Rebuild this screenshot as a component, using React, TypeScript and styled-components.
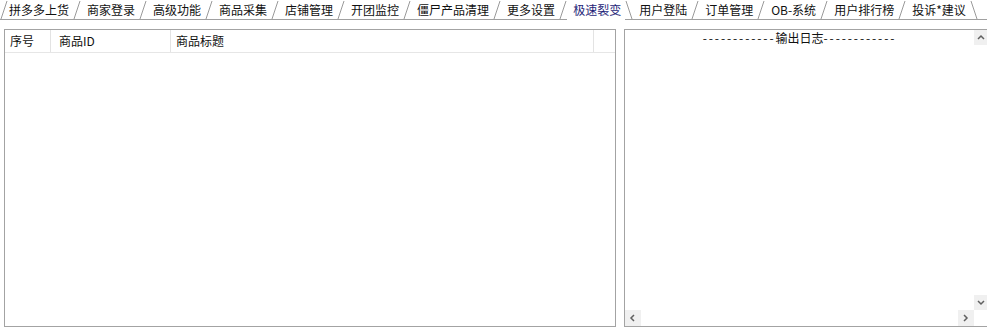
import React from 'react';
import styled, { createGlobalStyle } from 'styled-components';

const tabs = [
  '拼多多上货',
  '商家登录',
  '高级功能',
  '商品采集',
  '店铺管理',
  '开团监控',
  '僵尸产品清理',
  '更多设置',
  '极速裂变',
  '用户登陆',
  '订单管理',
  'OB-系统',
  '用户排行榜',
  '投诉*建议',
];

const ACTIVE = '极速裂变';

const GlobalStyle = createGlobalStyle`
  html, body {
    margin: 0;
    padding: 0;
    background: #ffffff;
    overflow: hidden;
  }
  body {
    font-family: "Noto Sans CJK SC", "Noto Sans", sans-serif;
    font-size: 12px;
    color: #111111;
  }
`;

const Page = styled.div`
  width: 987px;
  height: 332px;
  display: flex;
  flex-direction: column;
`;

const TabBar = styled.div`
  height: 20px;
  box-sizing: border-box;
  display: flex;
  align-items: stretch;
  border-bottom: 1px solid #a0a0a0;
`;

const Tab = styled.div<{ $active?: boolean; $first?: boolean }>`
  padding: 0 4px 0 ${({ $first }) => ($first ? 1 : 6)}px;
  line-height: 19px;
  white-space: nowrap;
  color: ${({ $active }) => ($active ? '#1e1e78' : '#111111')};
  ${({ $active }) =>
    $active
      ? `
    background: #ffffff;
    margin-bottom: -1px;
    height: 20px;
  `
      : ''}
`;

const SlantBox = styled.svg`
  flex: 0 0 8px;
  display: block;
`;

const Slant = ({ back }: { back?: boolean }) => (
  <SlantBox width="8" height="19" viewBox="0 0 8 19">
    <line
      x1={back ? 1 : 7}
      y1="1"
      x2={back ? 7 : 1}
      y2="19"
      stroke="#999999"
      strokeWidth="1"
    />
  </SlantBox>
);

const Body = styled.div`
  display: flex;
  gap: 8px;
  padding: 9px 0 0 4px;
`;

const ListPanel = styled.div`
  width: 612px;
  height: 298px;
  box-sizing: border-box;
  border: 1px solid #a3a3a3;
  background: #ffffff;
`;

const HeaderRow = styled.div`
  display: flex;
  height: 23px;
  box-sizing: border-box;
  border-bottom: 1px solid #e6e6e6;
`;

const HeaderCell = styled.div<{ $w?: number; $pad?: number }>`
  ${({ $w }) => ($w ? `flex: 0 0 ${$w}px;` : 'flex: 1;')}
  box-sizing: border-box;
  padding-left: ${({ $pad }) => $pad ?? 5}px;
  line-height: 22px;
  border-right: ${({ $w }) => ($w ? '1px solid #e3e3e3' : 'none')};
  white-space: nowrap;
  overflow: hidden;
`;

const LogPanel = styled.div`
  flex: 1;
  height: 298px;
  box-sizing: border-box;
  border: 1px solid #a3a3a3;
  border-right: none;
  display: grid;
  grid-template-columns: 1fr 13px;
  grid-template-rows: 1fr 16px;
  background: #ffffff;
`;

const LogText = styled.div`
  text-align: center;
  line-height: 15px;
  white-space: nowrap;
  min-width: 0;
`;

const Dashes = styled.span`
  letter-spacing: 1.9px;
`;

const VBar = styled.div`
  display: flex;
  flex-direction: column;
  background: #ffffff;
`;

const HBar = styled.div`
  display: flex;
  background: #ffffff;
`;

const Track = styled.div`
  flex: 1;
`;

const ScrollBtn = styled.div<{ $long?: number }>`
  flex: 0 0 ${({ $long }) => $long ?? 15}px;
  display: flex;
  align-items: center;
  justify-content: center;
  background: #f0f0f0;
`;

const Corner = styled.div`
  background: #ffffff;
`;

type Dir = 'up' | 'down' | 'left' | 'right';

const chevronPath: Record<Dir, string> = {
  up: 'M1 5 L4 2 L7 5',
  down: 'M1 2 L4 5 L7 2',
  left: 'M5 1 L2 4 L5 7',
  right: 'M2 1 L5 4 L2 7',
};

const Chevron = ({ dir }: { dir: Dir }) => (
  <svg width="8" height="8" viewBox="0 0 8 8">
    <path d={chevronPath[dir]} fill="none" stroke="#606060" strokeWidth="1.5" />
  </svg>
);

export default function App() {
  return (
    <Page>
      <GlobalStyle />
      <TabBar>
        {tabs.map((t, i) => (
          <React.Fragment key={t}>
            <Slant back={i > 0 && tabs[i - 1] === ACTIVE} />
            <Tab $active={t === ACTIVE} $first={i === 0}>
              {t}
            </Tab>
          </React.Fragment>
        ))}
        <Slant back />
      </TabBar>
      <Body>
        <ListPanel>
          <HeaderRow>
            <HeaderCell $w={46} $pad={5}>序号</HeaderCell>
            <HeaderCell $w={120} $pad={8}>商品ID</HeaderCell>
            <HeaderCell $w={423} $pad={5}>商品标题</HeaderCell>
            <HeaderCell />
          </HeaderRow>
        </ListPanel>
        <LogPanel>
          <LogText>
            <Dashes>------------</Dashes>输出日志<Dashes>------------</Dashes>
          </LogText>
          <VBar>
            <ScrollBtn>
              <Chevron dir="up" />
            </ScrollBtn>
            <Track />
            <ScrollBtn>
              <Chevron dir="down" />
            </ScrollBtn>
          </VBar>
          <HBar>
            <ScrollBtn $long={16}>
              <Chevron dir="left" />
            </ScrollBtn>
            <Track />
            <ScrollBtn $long={16}>
              <Chevron dir="right" />
            </ScrollBtn>
          </HBar>
          <Corner />
        </LogPanel>
      </Body>
    </Page>
  );
}
